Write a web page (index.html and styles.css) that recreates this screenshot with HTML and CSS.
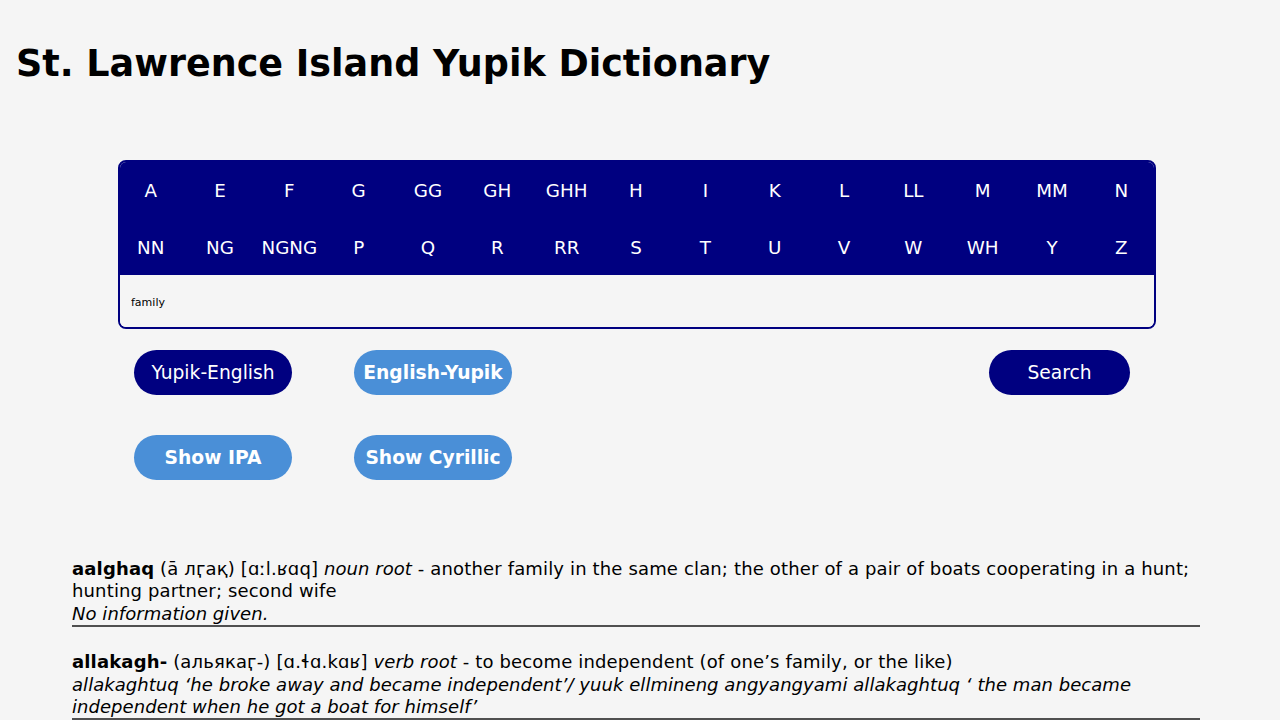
FILE: index.html
```html
<!DOCTYPE html>
<html lang="en">

<head>
    <meta charset="UTF-8">
    <meta name="viewport" content="width=device-width, initial-scale=1.0">
    <title>St. Lawrence Island Yupik Dictionary</title>
    <link rel="stylesheet" href="styles.css">
</head>

<body>
    <h1 class="title">St. Lawrence Island Yupik Dictionary</h1>

    <div class="search-box">
        <div class="letters">
            <span>A</span><span>E</span><span>F</span><span>G</span><span>GG</span>
            <span>GH</span><span>GHH</span><span>H</span><span>I</span><span>K</span>
            <span>L</span><span>LL</span><span>M</span><span>MM</span><span>N</span>
            <span>NN</span><span>NG</span><span>NGNG</span><span>P</span><span>Q</span>
            <span>R</span><span>RR</span><span>S</span><span>T</span><span>U</span>
            <span>V</span><span>W</span><span>WH</span><span>Y</span><span>Z</span>
        </div>
        <input type="text" class="query" value="family">
    </div>

    <div class="controls">
        <div class="control-row">
            <button class="btn btn-dark">Yupik-English</button>
            <button class="btn btn-light">English-Yupik</button>
            <button class="btn btn-dark btn-search">Search</button>
        </div>
        <div class="control-row">
            <button class="btn btn-light">Show IPA</button>
            <button class="btn btn-light">Show Cyrillic</button>
        </div>
    </div>

    <div class="results">
        <div class="entry">
            <b>aalghaq</b> (ā лӷақ) [ɑːl.ʁɑq] <i>noun root</i> - another family in the same clan; the other of a pair of boats cooperating in a hunt; hunting partner; second wife<br>
            <i>No information given.</i>
        </div>
        <div class="entry">
            <b>allakagh-</b> (альякаӷ-) [ɑ.ɬɑ.kɑʁ] <i>verb root</i> - to become independent (of one’s family, or the like)<br>
            <i>allakaghtuq ‘he broke away and became independent’/ yuuk ellmineng angyangyami allakaghtuq ‘ the man became independent when he got a boat for himself’</i>
        </div>
    </div>
</body>

</html>
```

FILE: styles.css
```css
body {
    font-family: 'DejaVu Sans', Verdana, sans-serif;
    background-color: #f5f5f5;
    color: #000000;
    margin: 0;
    padding: 0;
}

.title {
    font-size: 36.5px;
    line-height: 48px;
    margin: 40px 0 0 16px;
}

.search-box {
    width: 1034px;
    margin: 72px 0 0 118px;
    border: 2px solid #000080;
    border-radius: 8px;
    overflow: hidden;
}

.letters {
    display: grid;
    grid-template-columns: repeat(15, 1fr);
    grid-template-rows: 57px 56px;
    align-items: center;
    background-color: #000080;
    margin: 0 -2px 0 -4px;
}

.letters span {
    color: #ffffff;
    font-size: 18.3px;
    text-align: center;
}

.query {
    display: block;
    width: 100%;
    height: 52px;
    border: none;
    background-color: #f5f5f5;
    padding: 2px 11px 0;
    box-sizing: border-box;
    font-family: 'DejaVu Sans', Verdana, sans-serif;
    font-size: 11px;
    color: #000000;
}

.controls {
    width: 1038px;
    margin-left: 118px;
    padding: 21px 26px 0 16px;
    box-sizing: border-box;
}

.control-row {
    display: flex;
    gap: 62px;
    margin-bottom: 40px;
}

.btn {
    height: 45px;
    width: 158px;
    border: none;
    border-radius: 23px;
    color: #ffffff;
    font-family: 'DejaVu Sans', Verdana, sans-serif;
    font-size: 18.7px;
    padding: 0;
    cursor: pointer;
}

.btn-dark {
    background-color: #000080;
}

.btn-light {
    background-color: #4a8fd7;
    font-weight: bold;
}

.btn-search {
    width: 141px;
    margin-left: auto;
}

.results {
    margin: 78px 80px 0 72px;
}

.entry {
    font-size: 18px;
    letter-spacing: 0.15px;
    line-height: 22.4px;
    border-bottom: 2px solid #505050;
    margin-bottom: 24px;
}

.entry i {
    letter-spacing: 0.05px;
}
```
